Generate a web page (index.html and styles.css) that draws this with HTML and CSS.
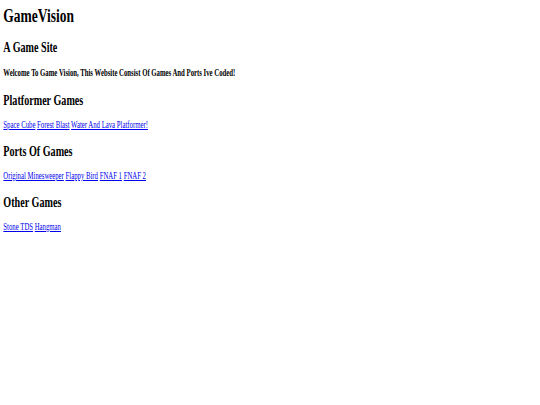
FILE: index.html
```html
<!DOCTYPE html>
<html>
<head>
<meta charset="utf-8">
<title>GameVision</title>
<link rel="stylesheet" href="styles.css">
</head>
<body>
<div class="page">
  <h1 class="title">GameVision</h1>
  <h2>A Game Site</h2>
  <h4>Welcome To Game Vision, This Website Consist Of Games And Ports Ive Coded!</h4>
  <h2>Platformer Games</h2>
  <p><a href="#">Space Cube</a> <a href="#">Forest Blast</a> <a href="#">Water And Lava Platformer!</a></p>
  <h2>Ports Of Games</h2>
  <p><a href="#">Original Minesweeper</a> <a href="#">Flappy Bird</a> <a href="#">FNAF 1</a> <a href="#">FNAF 2</a></p>
  <h2>Other Games</h2>
  <p><a href="#">Stone TDS</a> <a href="#">Hangman</a></p>
</div>
</body>
</html>
```
FILE: styles.css
```css
html {
  overflow: hidden;
  background: #ffffff;
}
body {
  margin: 0;
  font-family: "Liberation Serif", "Times New Roman", serif;
  color: #000000;
}
.page {
  font-size: 9.6px;
  line-height: 1.13;
  padding: 4.8px;
  transform: scaleX(0.703);
  transform-origin: 0 0;
}
.title {
  margin-top: 0;
}
a {
  color: #0000ee;
}
```
